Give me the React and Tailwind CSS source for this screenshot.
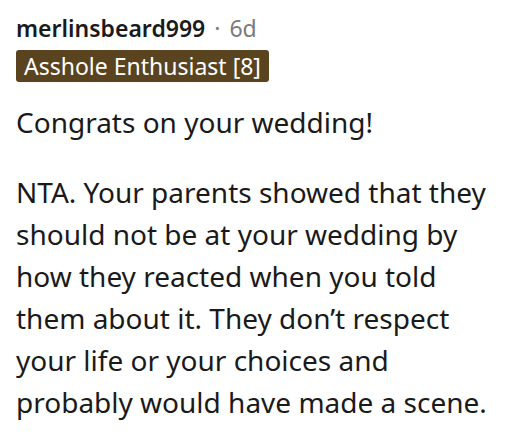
const BODY = [
  "Congrats on your wedding!",
  "NTA. Your parents showed that they should not be at your wedding by how they reacted when you told them about it. They don’t respect your life or your choices and probably would have made a scene.",
];

export default function App() {
  return (
    <div className="h-[446px] w-[514px] bg-white pl-4 pr-[12px] pt-[12px] font-['Noto_Sans',sans-serif] text-[#1a1a1b]">
      <div className="flex items-baseline gap-[9px] text-[23px] leading-[32px]">
        <span className="font-semibold">merlinsbeard999</span>
        <span className="text-[#787c7e]">·</span>
        <span className="text-[#787c7e]">6d</span>
      </div>
      <div className="mt-[6px] inline-block rounded-[3px] bg-[#5a4420] px-[8px] text-[23px] leading-[32px] text-white">
        Asshole Enthusiast [8]
      </div>
      <div className="mt-[19px] flex flex-col gap-[28px] text-[28px] leading-[42px]">
        {BODY.map((para) => (
          <p key={para}>{para}</p>
        ))}
      </div>
    </div>
  );
}
